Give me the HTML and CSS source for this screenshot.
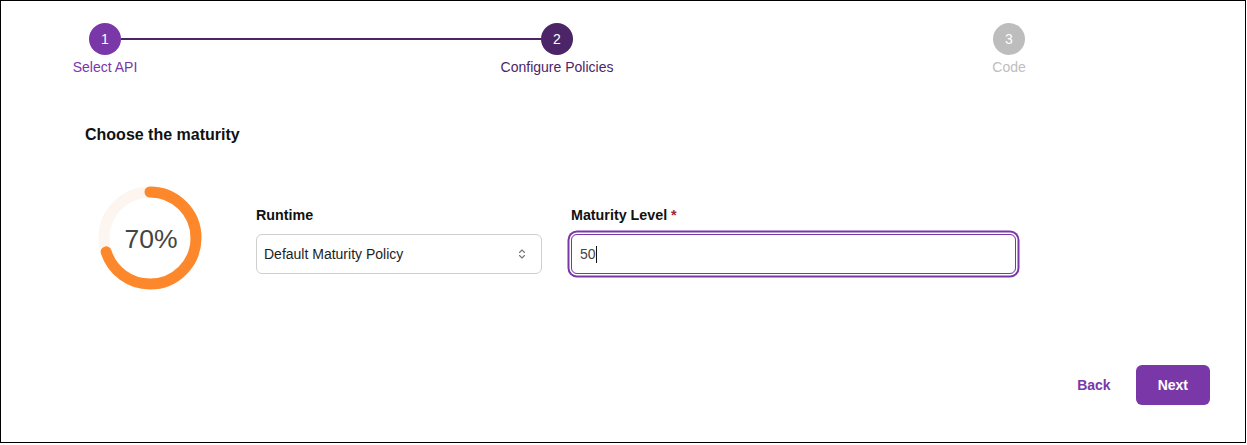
FILE: index.html
```
<!DOCTYPE html>
<html lang="en">
<head>
<meta charset="utf-8">
<title>Configure Policies</title>
<link rel="stylesheet" href="styles.css">
</head>
<body>
<div class="frame">
  <div class="stepper">
    <div class="step step-done">
      <div class="step-circle">1</div>
      <div class="step-label">Select API</div>
    </div>
    <div class="step step-active">
      <div class="step-circle">2</div>
      <div class="step-label">Configure Policies</div>
    </div>
    <div class="step step-todo">
      <div class="step-circle">3</div>
      <div class="step-label">Code</div>
    </div>
  </div>

  <section class="content">
    <h2 class="heading">Choose the maturity</h2>
    <div class="row">
      <div class="gauge">
        <svg width="104" height="104" viewBox="0 0 104 104">
          <circle cx="52" cy="52" r="46" fill="none" stroke="#fdf6f0" stroke-width="11"/>
          <circle cx="52" cy="52" r="46" fill="none" stroke="#fd882b" stroke-width="11" stroke-linecap="round" stroke-dasharray="202.3 289.03" transform="rotate(-90 52 52)"/>
          <text x="53" y="53" text-anchor="middle" dominant-baseline="central" class="gauge-text">70%</text>
        </svg>
      </div>
      <div class="field field-runtime">
        <label class="field-label">Runtime</label>
        <div class="select">
          <span class="select-value">Default Maturity Policy</span>
          <svg class="select-icon" width="8" height="12" viewBox="0 0 8 12">
            <path d="M1.5 4.5 L4 2 L6.5 4.5" fill="none" stroke="#777" stroke-width="1.1" stroke-linecap="round" stroke-linejoin="round"/>
            <path d="M1.5 7.5 L4 10 L6.5 7.5" fill="none" stroke="#777" stroke-width="1.1" stroke-linecap="round" stroke-linejoin="round"/>
          </svg>
        </div>
      </div>
      <div class="field field-level">
        <label class="field-label">Maturity Level <span class="req">*</span></label>
        <div class="input">
          <span class="input-value">50</span><span class="caret"></span>
        </div>
      </div>
    </div>
  </section>

  <div class="actions">
    <button class="btn btn-text">Back</button>
    <button class="btn btn-primary">Next</button>
  </div>
</div>
</body>
</html>
```
FILE: styles.css
```
* { box-sizing: border-box; }
html, body { margin: 0; padding: 0; background: #fff; }
body {
  font-family: "Liberation Sans", Arial, sans-serif;
  font-size: 14px;
  color: #1d1d1d;
}
.frame {
  width: 1246px;
  height: 443px;
  border: 1px solid #000;
  display: flex;
  flex-direction: column;
  padding-bottom: 37px;
}

/* stepper */
.stepper {
  display: flex;
  gap: 252px;
  padding-top: 22px;
  padding-left: 4px;
}
.step {
  width: 200px;
  display: flex;
  flex-direction: column;
  align-items: center;
  position: relative;
}
.step-circle {
  width: 32px;
  height: 32px;
  border-radius: 50%;
  color: #fff;
  font-size: 14px;
  line-height: 32px;
  text-align: center;
  position: relative;
  z-index: 1;
}
.step-label {
  margin-top: 4px;
  line-height: 16px;
  font-size: 14px;
}
.step-done .step-circle { background: #7a37a8; }
.step-done .step-label { color: #7a37a8; }
.step-done::after {
  content: "";
  position: absolute;
  left: 116px;
  top: 15px;
  width: 420px;
  height: 2px;
  background: #4b2567;
}
.step-active .step-circle { background: #4b2567; }
.step-active .step-label { color: #4b2567; }
.step-todo .step-circle { background: #bdbdbd; }
.step-todo .step-label { color: #bdbdbd; }

/* content */
.content {
  padding-left: 84px;
}
.heading {
  margin: 51px 0 0 0;
  font-size: 16px;
  line-height: 18px;
  font-weight: bold;
  color: #111;
}
.row {
  display: flex;
  align-items: flex-start;
}
.gauge {
  margin-top: 42px;
  margin-left: 13px;
  width: 104px;
  height: 104px;
}
.gauge svg { display: block; }
.gauge-text {
  font-family: "Liberation Sans", Arial, sans-serif;
  font-size: 26.5px;
  fill: #454545;
}
.field {
  margin-top: 63px;
  display: flex;
  flex-direction: column;
}
.field-runtime { margin-left: 54px; width: 286px; }
.field-level { margin-left: 29px; width: 445px; }
.field-label {
  font-weight: bold;
  font-size: 14.3px;
  line-height: 16px;
  color: #111;
  margin-bottom: 11px;
}
.req { color: #a3242e; }
.select {
  height: 40px;
  border: 1px solid #cfcfcf;
  border-radius: 6px;
  display: flex;
  align-items: center;
  justify-content: space-between;
  padding: 0 15px 0 7px;
}
.select-value { color: #1d1d1d; }
.select-icon { display: block; }
.input {
  height: 40px;
  border: 1px solid #7a37a8;
  border-radius: 6px;
  box-shadow: 0 0 0 1.5px #fff, 0 0 0 3.5px #7a37a8;
  display: flex;
  align-items: center;
  padding-left: 8px;
}
.input-value { color: #444; }
.caret {
  display: inline-block;
  width: 1px;
  height: 17px;
  background: #111;
}

/* actions */
.actions {
  margin-top: auto;
  display: flex;
  justify-content: flex-end;
  gap: 13px;
  padding-right: 35px;
}
.btn {
  height: 40px;
  border: none;
  font-family: "Liberation Sans", Arial, sans-serif;
  font-weight: bold;
  font-size: 14px;
  cursor: pointer;
  border-radius: 6px;
}
.btn-text {
  background: transparent;
  color: #7a37a8;
  padding: 0 12px;
}
.btn-primary {
  background: #7a37a8;
  color: #fff;
  padding: 0 22px;
}
```
